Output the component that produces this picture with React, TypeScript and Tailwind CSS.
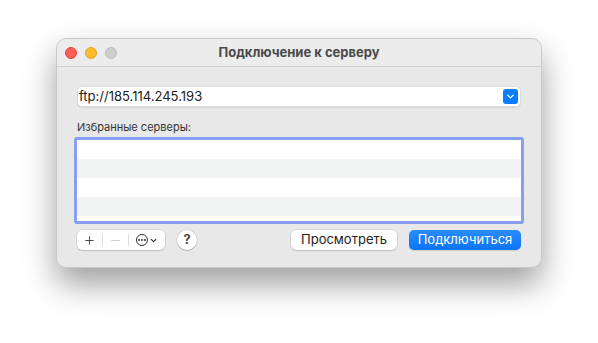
import { Plus, Minus, Ellipsis, ChevronDown } from "lucide-react"

const font = { fontFamily: "Inter, 'Noto Sans', sans-serif" }

function TrafficLights() {
  return (
    <div className="flex items-center gap-[8px]">
      <span className="h-[12px] w-[12px] rounded-full bg-[#fe5f57] border border-[#e0443e]" />
      <span className="h-[12px] w-[12px] rounded-full bg-[#febc2e] border border-[#dea123]" />
      <span className="h-[12px] w-[12px] rounded-full bg-[#cdcdcd] border border-[#bdbdbd]" />
    </div>
  )
}

function ServerRows() {
  const rows = [false, true, false, true, false]
  return (
    <div className="flex h-[81px] flex-col overflow-hidden bg-white">
      {rows.map((gray, i) => (
        <div key={i} className={"h-[19px] shrink-0 " + (gray ? "bg-[#f2f3f3]" : "bg-white")} />
      ))}
    </div>
  )
}

export default function App() {
  return (
    <div className="h-[343px] w-[598px] bg-white px-[56px] pt-[38px]" style={font}>
      <div className="flex h-[230px] flex-col overflow-hidden rounded-[10px] border border-[#c8c8c8] bg-[#e8e8e8] shadow-[0_16px_32px_rgba(0,0,0,0.38)]">
        <header className="relative flex h-[28px] shrink-0 items-center border-b border-[#d2d2d2] bg-[#ececec] px-[8px]">
          <TrafficLights />
          <span className="absolute inset-x-0 text-center text-[13px] font-bold text-[#4a4a4a]">
            Подключение к серверу
          </span>
        </header>

        <div className="flex flex-col px-[20px] pt-[19px]">
          <div className="flex h-[21px] items-center justify-between rounded-[5px] border border-[#dcdcdc] bg-white pl-[1px] pr-[2px] shadow-[0_1px_1px_rgba(0,0,0,0.08)]">
            <span className="text-[13px] text-[#222]">ftp://185.114.245.193</span>
            <span className="flex h-[15px] w-[15px] items-center justify-center rounded-[3px] bg-[#0a7cff]">
              <ChevronDown className="h-[11px] w-[11px] text-white" strokeWidth={3} />
            </span>
          </div>

          <span className="mt-[13px] text-[11px] leading-[14px] text-[#333]">Избранные серверы:</span>

          <div className="mt-[3px] -mx-[3px] rounded-[3px] border-[3px] border-[#889ef0]">
            <ServerRows />
          </div>

          <div className="mt-[6px] flex items-center">
            <div className="flex h-[20px] w-[88px] items-center rounded-[5px] bg-white shadow-[0_0_0_0.5px_rgba(0,0,0,0.15),0_1px_1px_rgba(0,0,0,0.12)]">
              <span className="flex w-[25px] justify-center">
                <Plus className="h-[13px] w-[13px] text-[#333]" strokeWidth={1.6} />
              </span>
              <span className="h-[12px] w-px bg-[#dcdcdc]" />
              <span className="flex w-[25px] justify-center">
                <Minus className="h-[13px] w-[13px] text-[#c6c6c6]" strokeWidth={1.6} />
              </span>
              <span className="h-[12px] w-px bg-[#dcdcdc]" />
              <span className="flex flex-1 items-center justify-center gap-[1px]">
                <span className="flex h-[12px] w-[12px] items-center justify-center rounded-full border-[1.3px] border-[#333]">
                  <Ellipsis className="h-[10px] w-[10px] text-[#333]" strokeWidth={3} />
                </span>
                <ChevronDown className="h-[9px] w-[9px] text-[#333]" strokeWidth={3} />
              </span>
            </div>
            <span className="ml-[12px] flex h-[20px] w-[20px] items-center justify-center rounded-full bg-white text-[13px] font-semibold text-[#333] shadow-[0_0_0_0.5px_rgba(0,0,0,0.15),0_1px_1px_rgba(0,0,0,0.15)]">
              ?
            </span>
            <div className="flex-1" />
            <button className="flex h-[20px] w-[106px] items-center justify-center rounded-[5px] bg-white text-[13px] text-[#222] shadow-[0_0_0_0.5px_rgba(0,0,0,0.15),0_1px_1px_rgba(0,0,0,0.12)]">
              Просмотреть
            </button>
            <button className="ml-[12px] flex h-[20px] w-[112px] items-center justify-center rounded-[5px] bg-gradient-to-b from-[#2a8bff] to-[#0a74f5] text-[13px] text-white shadow-[0_1px_1px_rgba(0,0,0,0.12)]">
              Подключиться
            </button>
          </div>
        </div>
      </div>
    </div>
  )
}
